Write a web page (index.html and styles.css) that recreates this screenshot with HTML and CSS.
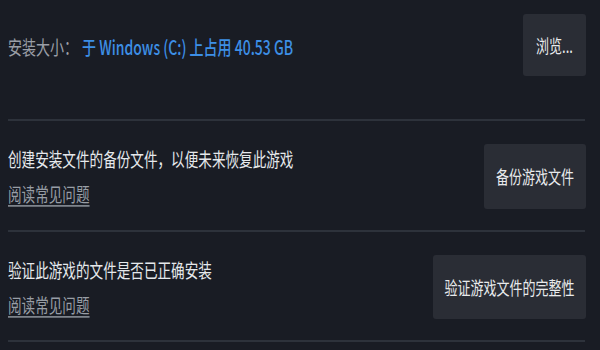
FILE: index.html
```html
<!DOCTYPE html>
<html lang="zh-CN">
<head>
<meta charset="utf-8">
<title>安装文件</title>
<link rel="stylesheet" href="styles.css">
</head>
<body>
<div class="panel">
  <section class="row row-size">
    <div class="info">
      <span class="txt"><span class="label">安装大小：</span><span class="value">于 Windows (C:) 上占用 40.53 GB</span></span>
    </div>
    <button class="btn btn-browse"><span class="txt">浏览...</span></button>
  </section>
  <div class="divider"></div>
  <section class="row">
    <div class="info">
      <div class="title"><span class="txt">创建安装文件的备份文件，以便未来恢复此游戏</span></div>
      <div class="link"><span class="txt">阅读常见问题</span></div>
    </div>
    <button class="btn btn-backup"><span class="txt">备份游戏文件</span></button>
  </section>
  <div class="divider"></div>
  <section class="row">
    <div class="info">
      <div class="title"><span class="txt">验证此游戏的文件是否已正确安装</span></div>
      <div class="link"><span class="txt">阅读常见问题</span></div>
    </div>
    <button class="btn btn-verify"><span class="txt">验证游戏文件的完整性</span></button>
  </section>
  <div class="divider"></div>
</div>
</body>
</html>
```

FILE: styles.css
```css
html, body {
  margin: 0;
  padding: 0;
  background: #191c24;
  height: 100%;
  overflow: hidden;
}

body {
  font-family: "Noto Sans CJK SC", "Noto Sans", sans-serif;
  font-size: 13.6px;
  color: #dfe2e6;
}

.panel {
  padding: 0 14px 0 8px;
}

.txt {
  display: inline-block;
  transform: scaleY(1.4);
  transform-origin: center;
  white-space: nowrap;
}

.row {
  display: flex;
  align-items: center;
  justify-content: space-between;
  padding: 23px 0 21px 0;
}

.row-size {
  padding: 14px 0 43px 0;
}

.info {
  display: flex;
  flex-direction: column;
}

.label {
  color: #9a9ea6;
  font-size: 14px;
  margin-right: 4px;
}

.value {
  color: #3d8fe6;
  font-size: 14px;
  font-weight: 500;
}

.row-size .info {
  padding-top: 4px;
}

.title {
  line-height: 20px;
  color: #e6e9ec;
}

.link {
  line-height: 20px;
  margin-top: 15px;
  color: #989ea6;
}

.link .txt {
  text-decoration: underline;
  text-underline-offset: 2px;
}

.divider {
  height: 2px;
  background: #2d323b;
  margin-right: 1px;
}

.btn {
  border: none;
  border-radius: 3px;
  background: #2a2d35;
  color: #e8eaec;
  font-family: inherit;
  font-size: 13px;
  padding: 0;
  text-align: center;
  cursor: pointer;
}

.btn-browse {
  width: 63px;
  height: 62px;
}

.btn-backup {
  width: 102px;
  height: 65px;
}

.btn-verify {
  width: 153px;
  height: 64px;
}
```
